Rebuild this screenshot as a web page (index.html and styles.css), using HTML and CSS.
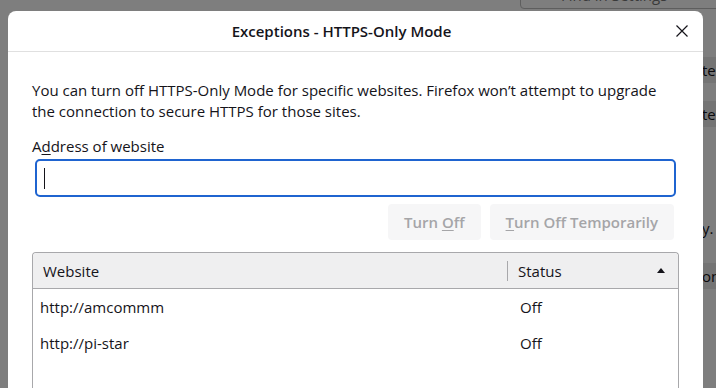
FILE: index.html
```html
<!DOCTYPE html>
<html lang="en">
<head>
    <meta charset="UTF-8">
    <title>Exceptions - HTTPS-Only Mode</title>
    <link rel="stylesheet" href="styles.css">
</head>
<body>

    <!-- dimmed settings page behind the dialog -->
    <div class="backdrop">
        <div class="search-box">Find in Settings</div>
        <div class="bg-rows">
            <div class="bg-row dark first">tes</div>
            <div class="bg-row dark">tes</div>
            <div class="bg-row plain">y.</div>
            <div class="bg-row dark">ons</div>
        </div>
    </div>

    <div class="dialog">
        <div class="dialog-header">
            <span class="dialog-title">Exceptions - HTTPS-Only Mode</span>
            <span class="close-btn">
                <svg width="12" height="12" viewBox="0 0 12 12">
                    <path d="M0.5 0.5 L11.5 11.5 M11.5 0.5 L0.5 11.5" stroke="#15141a" stroke-width="1.2" fill="none"/>
                </svg>
            </span>
        </div>

        <div class="dialog-body">
            <p class="intro">You can turn off HTTPS-Only Mode for specific websites. Firefox won’t attempt to upgrade the connection to secure HTTPS for those sites.</p>

            <label class="field-label">A<u>d</u>dress of website</label>
            <div class="url-input"><span class="caret"></span></div>

            <div class="button-row">
                <button class="btn" disabled>Turn <u>O</u>ff</button>
                <button class="btn" disabled><u>T</u>urn Off Temporarily</button>
            </div>

            <div class="site-list">
                <div class="list-head">
                    <div class="col-site">Website</div>
                    <div class="col-status">
                        <span>Status</span>
                        <span class="sort-arrow"></span>
                    </div>
                </div>
                <div class="list-row">
                    <div class="col-site">http://amcommm</div>
                    <div class="col-status">Off</div>
                </div>
                <div class="list-row">
                    <div class="col-site">http://pi-star</div>
                    <div class="col-status">Off</div>
                </div>
            </div>
        </div>
    </div>

</body>
</html>
```

FILE: styles.css
```css
/* --- page --- */
body {
    margin: 0;
    height: 388px;
    overflow: hidden;
    background-color: #7e7e7e;
    font-family: 'Open Sans', 'Noto Sans', sans-serif;
    color: #15141a;
    position: relative;
}

/* --- dimmed page behind --- */
.backdrop {
    display: flex;
    flex-direction: column;
    align-items: flex-end;
    color: #0b0a0d;
    font-size: 15px;
}

.search-box {
    width: 210px;
    height: 28px;
    margin-top: -19px;
    margin-right: -14px;
    box-sizing: border-box;
    border: 1px solid #5e5e5e;
    border-radius: 4px;
    padding: 0 0 0 40px;
    line-height: 26px;
    color: #3a3a3a;
}

.bg-rows {
    width: 30px;
    margin-top: 48px;
    margin-right: -16px;
}

.bg-row {
    height: 26px;
    line-height: 26px;
    white-space: nowrap;
}

.bg-row.dark {
    background-color: #747474;
    margin-top: 22px;
}

.bg-row.dark.first {
    margin-top: 0;
}

.bg-row.dark + .bg-row.dark {
    margin-top: 18px;
}

.bg-row.plain {
    margin-top: 88px;
}

/* --- dialog --- */
.dialog {
    position: absolute;
    left: 8px;
    top: 11px;
    width: 695px;
    height: 400px;
    background-color: #fff;
    border-radius: 8px 8px 0 0;
}

.dialog-header {
    height: 40px;
    border-bottom: 1px solid #e0e0e0;
    display: flex;
    align-items: center;
    padding: 0 15px 0 0;
}

.dialog-title {
    flex: 1;
    text-align: center;
    font-size: 15px;
    font-weight: 600;
    padding-right: 1px;
}

.close-btn {
    display: flex;
    width: 12px;
    height: 12px;
}

.dialog-body {
    padding: 28px 24px 0 24px;
}

.intro {
    margin: 0;
    font-size: 15px;
    line-height: 21px;
}

.field-label {
    display: block;
    margin-top: 14px;
    font-size: 15px;
    line-height: 21px;
}

.field-label u,
.btn u {
    text-decoration-thickness: 1px;
    text-underline-offset: 2px;
}

.url-input {
    margin: 2px 3px 0 3px;
    height: 38px;
    box-sizing: border-box;
    border: 2px solid #1f64d0;
    border-radius: 5px;
    display: flex;
    align-items: center;
    padding-left: 7px;
}

.caret {
    width: 1px;
    height: 21px;
    background-color: #15141a;
}

.button-row {
    display: flex;
    justify-content: flex-end;
    gap: 9px;
    margin-top: 7px;
    padding-right: 5px;
}

.btn {
    height: 36px;
    padding: 0 16px;
    border: none;
    border-radius: 4px;
    background-color: #f6f6f7;
    color: #a5a5a8;
    font-family: 'Open Sans', 'Noto Sans', sans-serif;
    font-size: 15px;
    font-weight: 600;
}

/* --- site list --- */
.site-list {
    margin-top: 12px;
    border: 1px solid #a8a8ab;
    border-bottom: none;
    border-radius: 4px 4px 0 0;
    height: 200px;
}

.list-head {
    display: flex;
    height: 35px;
    background-color: #efeff0;
    border-bottom: 1px solid #a8a8ab;
    border-radius: 4px 4px 0 0;
    align-items: center;
    font-size: 15px;
}

.list-head .col-site {
    padding-left: 10px;
    border-right: 1px solid #a8a8ab;
    height: 20px;
    line-height: 20px;
}

.col-site {
    width: 464px;
}

.col-status {
    flex: 1;
    display: flex;
    align-items: center;
    justify-content: space-between;
    padding-left: 10px;
    padding-right: 13px;
}

.sort-arrow {
    width: 0;
    height: 0;
    border-left: 4px solid transparent;
    border-right: 4px solid transparent;
    border-bottom: 5px solid #15141a;
}

.list-row {
    display: flex;
    height: 36px;
    align-items: center;
    font-size: 15px;
}

.list-row .col-site {
    padding-left: 7px;
    width: 467px;
}

.list-row .col-status {
    padding-left: 13px;
}
```
